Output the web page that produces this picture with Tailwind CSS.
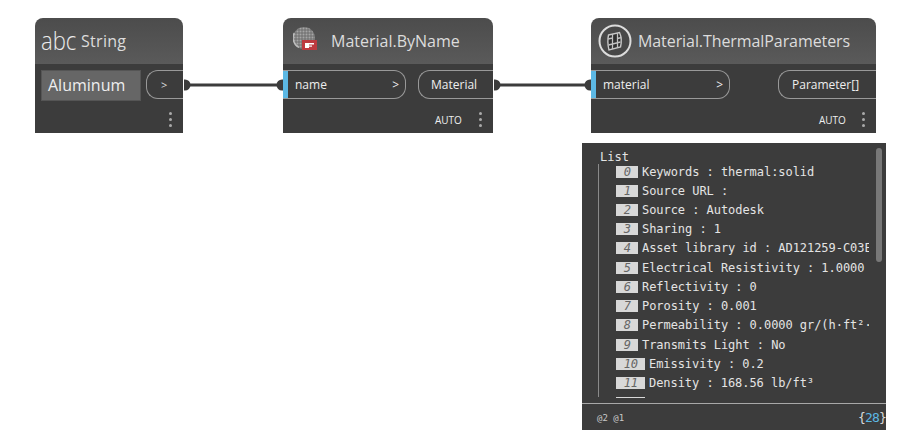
<!DOCTYPE html>
<html>
<head>
<meta charset="utf-8">
<script src="https://cdn.jsdelivr.net/npm/@tailwindcss/browser@4"></script>
</head>
<body class="bg-white">
<div class="relative w-[910px] h-[442px] overflow-hidden bg-white font-['Open_Sans','Noto_Sans',sans-serif]">

  <!-- connectors -->
  <svg class="absolute left-0 top-0" width="910" height="442" viewBox="0 0 910 442" fill="none">
    <path d="M184 79.5 h1 a5.5 5.5 0 0 1 0 11 h-1 Z" fill="#3c3c3c"/>
    <path d="M283 79.5 h-1 a5.5 5.5 0 0 0 0 11 h1 Z" fill="#3c3c3c"/>
    <path d="M187 85 H281" stroke="#3c3c3c" stroke-width="3"/>
    <path d="M494 79.5 h1 a5.5 5.5 0 0 1 0 11 h-1 Z" fill="#3c3c3c"/>
    <path d="M591 79.5 h-1 a5.5 5.5 0 0 0 0 11 h1 Z" fill="#3c3c3c"/>
    <path d="M497 85 H589" stroke="#3c3c3c" stroke-width="3"/>
  </svg>

  <!-- String node -->
  <div class="absolute left-[35px] top-[18px] w-[148px] h-[115px] flex flex-col">
    <div class="h-[46px] shrink-0 rounded-t-lg bg-gradient-to-b from-[#4c4c4c] to-[#5a5a5a] flex items-center pl-[6px] text-[#dcdcdc]">
      <span class="block w-[32px] text-[26px] leading-none font-light text-[#ececec] scale-x-[0.85] origin-left -mt-[3px]">abc</span>
      <span class="ml-[8px] text-[16px] leading-none tracking-[0.3px]">String</span>
    </div>
    <div class="flex-1 bg-[#3c3c3c] relative pt-[6px] pl-[6px]">
      <div class="flex items-start gap-[5px]">
        <div class="w-[100px] h-[31px] bg-[#666666] border border-[#555555] text-[#eeeeee] text-[16px] leading-[28px] pl-[6px]">Aluminum</div>
        <div class="w-[37px] h-[29px] rounded-l-[12px] border border-r-0 border-[#999999] text-[#dddddd] text-[11px] leading-[27px] pl-[14px]">&gt;</div>
      </div>
      <div class="absolute right-[11px] bottom-[6px] flex flex-col gap-[3px]">
        <i class="block w-[3px] h-[3px] bg-[#aaaaaa] rounded-full"></i><i class="block w-[3px] h-[3px] bg-[#aaaaaa] rounded-full"></i><i class="block w-[3px] h-[3px] bg-[#aaaaaa] rounded-full"></i>
      </div>
    </div>
  </div>

  <!-- Material.ByName node -->
  <div class="absolute left-[283px] top-[18px] w-[210px] h-[115px] flex flex-col">
    <div class="h-[46px] shrink-0 rounded-t-lg bg-gradient-to-b from-[#4c4c4c] to-[#5a5a5a] flex items-center pl-[10px] text-[#dcdcdc]">
      <svg width="25" height="26" viewBox="0 0 25 26" class="shrink-0 -mt-[2px]">
        <defs><pattern id="chk" width="3" height="3" patternUnits="userSpaceOnUse"><rect width="3" height="3" fill="#777777"/><circle cx="1.5" cy="1.5" r="1" fill="#a6a6a6"/></pattern></defs>
        <circle cx="11" cy="11" r="11" fill="url(#chk)"/>
        <path d="M1.2 6 A11 11 0 0 0 6 20.5" stroke="#bdbdbd" stroke-width="1.4" fill="none"/>
        <rect x="9" y="13" width="15" height="10" fill="#bd3a40"/>
        <rect x="12" y="16" width="4" height="5" fill="#ffffff"/>
        <rect x="16" y="16" width="5" height="1.5" fill="#ffffff"/>
        <rect x="16" y="18.5" width="3" height="1.2" fill="#ffffff"/>
      </svg>
      <span class="ml-[13px] text-[16px] leading-none">Material.ByName</span>
    </div>
    <div class="flex-1 bg-[#3c3c3c] relative pt-[6px]">
      <div class="flex items-start justify-between">
        <div class="w-[123px] h-[29px] rounded-r-[12px] border border-l-0 border-[#999999] text-[#eeeeee] text-[12px] leading-[27px] flex overflow-hidden">
          <i class="block w-[5px] h-full bg-[#5cb8e4]"></i>
          <span class="ml-[7px] flex-1">name</span><span class="mr-[6px]">&gt;</span>
        </div>
        <div class="w-[75px] h-[29px] rounded-l-[12px] border border-r-0 border-[#999999] text-[#eeeeee] text-[12px] leading-[27px] pl-[12px]">Material</div>
      </div>
      <span class="absolute left-[152px] bottom-[8px] text-[10px] leading-none font-normal text-[#eeeeee]">AUTO</span>
      <div class="absolute right-[11px] bottom-[6px] flex flex-col gap-[3px]">
        <i class="block w-[3px] h-[3px] bg-[#aaaaaa] rounded-full"></i><i class="block w-[3px] h-[3px] bg-[#aaaaaa] rounded-full"></i><i class="block w-[3px] h-[3px] bg-[#aaaaaa] rounded-full"></i>
      </div>
    </div>
  </div>

  <!-- Material.ThermalParameters node -->
  <div class="absolute left-[591px] top-[18px] w-[285px] h-[115px] flex flex-col">
    <div class="h-[46px] shrink-0 rounded-t-lg bg-gradient-to-b from-[#4c4c4c] to-[#5a5a5a] flex items-center pl-[7px] text-[#dcdcdc]">
      <svg width="34" height="34" viewBox="0 0 34 34" fill="none" class="shrink-0 -mt-[1px]">
        <circle cx="17" cy="17" r="15.5" fill="#484848" stroke="#dcdcdc" stroke-width="2"/>
        <path d="M10.5 11 L21.5 8.5 Q24.5 15 22.5 23 L11 26 Q9 18 10.5 11 Z" fill="#2e2e2e" stroke="#c8c8c8" stroke-width="1.4"/>
        <path d="M14.5 10 V25 M19.5 9 V24 M10 15 L14.5 14 M19.5 14.5 L23.3 13.5 M10.5 21 L22.5 18" stroke="#c0c0c0" stroke-width="1.3"/>
      </svg>
      <span class="ml-[6px] text-[16px] leading-none tracking-[-0.08px]">Material.ThermalParameters</span>
    </div>
    <div class="flex-1 bg-[#3c3c3c] relative pt-[6px]">
      <div class="flex items-start justify-between">
        <div class="w-[139px] h-[29px] rounded-r-[12px] border border-l-0 border-[#999999] text-[#eeeeee] text-[12px] leading-[27px] flex overflow-hidden">
          <i class="block w-[5px] h-full bg-[#5cb8e4]"></i>
          <span class="ml-[7px] flex-1">material</span><span class="mr-[6px]">&gt;</span>
        </div>
        <div class="w-[98px] h-[29px] rounded-l-[12px] border border-r-0 border-[#999999] text-[#eeeeee] text-[12px] leading-[27px] pl-[13px]">Parameter[]</div>
      </div>
      <span class="absolute left-[228px] bottom-[8px] text-[10px] leading-none font-normal text-[#eeeeee]">AUTO</span>
      <div class="absolute right-[11px] bottom-[6px] flex flex-col gap-[3px]">
        <i class="block w-[3px] h-[3px] bg-[#aaaaaa] rounded-full"></i><i class="block w-[3px] h-[3px] bg-[#aaaaaa] rounded-full"></i><i class="block w-[3px] h-[3px] bg-[#aaaaaa] rounded-full"></i>
      </div>
    </div>
  </div>

  <!-- Preview bubble -->
  <div class="absolute left-[582px] top-[143px] w-[304px] h-[287px] bg-[#3c3c3c] flex flex-col font-['DejaVu_Sans_Mono',monospace] text-[#e4e4e4]">
    <div class="relative h-[261px] shrink-0 overflow-hidden border-b border-[#a8a8a8]">
      <div class="absolute right-[4px] top-[5px] w-[6px] h-[114px] rounded-full bg-[#787878]"></div>
      <div class="absolute left-[16px] top-[21px] bottom-[6px] w-px bg-[#8a8a8a]"></div>
      <div class="absolute left-[18px] top-[7px] text-[12px] leading-[14px]">List</div>
      <div class="absolute left-[34px] top-[22px] w-[253px] h-[233px] overflow-hidden flex flex-col text-[12px] leading-[14px] tracking-[-0.05px] whitespace-nowrap">
        <div class="h-[19px] shrink-0 flex items-start"><span class="w-[22px] h-[12px] mt-[1px] mr-[4px] bg-[#d8d8d8] text-[#666666] italic text-right pr-[7px] leading-[12px] shrink-0">0</span>Keywords : thermal:solid</div>
        <div class="h-[19px] shrink-0 flex items-start"><span class="w-[22px] h-[12px] mt-[1px] mr-[4px] bg-[#d8d8d8] text-[#666666] italic text-right pr-[7px] leading-[12px] shrink-0">1</span>Source URL :</div>
        <div class="h-[19px] shrink-0 flex items-start"><span class="w-[22px] h-[12px] mt-[1px] mr-[4px] bg-[#d8d8d8] text-[#666666] italic text-right pr-[7px] leading-[12px] shrink-0">2</span>Source : Autodesk</div>
        <div class="h-[19px] shrink-0 flex items-start"><span class="w-[22px] h-[12px] mt-[1px] mr-[4px] bg-[#d8d8d8] text-[#666666] italic text-right pr-[7px] leading-[12px] shrink-0">3</span>Sharing : 1</div>
        <div class="h-[20px] shrink-0 flex items-start"><span class="w-[22px] h-[12px] mt-[1px] mr-[4px] bg-[#d8d8d8] text-[#666666] italic text-right pr-[7px] leading-[12px] shrink-0">4</span>Asset library id : AD121259-C03E</div>
        <div class="h-[19px] shrink-0 flex items-start"><span class="w-[22px] h-[12px] mt-[1px] mr-[4px] bg-[#d8d8d8] text-[#666666] italic text-right pr-[7px] leading-[12px] shrink-0">5</span>Electrical Resistivity : 1.0000</div>
        <div class="h-[19px] shrink-0 flex items-start"><span class="w-[22px] h-[12px] mt-[1px] mr-[4px] bg-[#d8d8d8] text-[#666666] italic text-right pr-[7px] leading-[12px] shrink-0">6</span>Reflectivity : 0</div>
        <div class="h-[19px] shrink-0 flex items-start"><span class="w-[22px] h-[12px] mt-[1px] mr-[4px] bg-[#d8d8d8] text-[#666666] italic text-right pr-[7px] leading-[12px] shrink-0">7</span>Porosity : 0.001</div>
        <div class="h-[20px] shrink-0 flex items-start"><span class="w-[22px] h-[12px] mt-[1px] mr-[4px] bg-[#d8d8d8] text-[#666666] italic text-right pr-[7px] leading-[12px] shrink-0">8</span>Permeability : 0.0000 gr/(h·ft²·</div>
        <div class="h-[19px] shrink-0 flex items-start"><span class="w-[22px] h-[12px] mt-[1px] mr-[4px] bg-[#d8d8d8] text-[#666666] italic text-right pr-[7px] leading-[12px] shrink-0">9</span>Transmits Light : No</div>
        <div class="h-[19px] shrink-0 flex items-start"><span class="w-[29px] h-[12px] mt-[1px] mr-[4px] bg-[#d8d8d8] text-[#666666] italic text-right pr-[7px] leading-[12px] shrink-0">10</span>Emissivity : 0.2</div>
        <div class="h-[20px] shrink-0 flex items-start"><span class="w-[29px] h-[12px] mt-[1px] mr-[4px] bg-[#d8d8d8] text-[#666666] italic text-right pr-[7px] leading-[12px] shrink-0">11</span>Density : 168.56 lb/ft³</div>
        <div class="h-[19px] shrink-0 flex items-start"><span class="w-[29px] h-[12px] mt-[1px] mr-[4px] bg-[#d8d8d8] text-[#666666] italic text-right pr-[7px] leading-[12px] shrink-0">12</span><span class="mt-[1px]">Thermal Conductivity : 137 W/(m·K)</span></div>
      </div>
    </div>
    <div class="flex-1 flex items-center justify-between pl-[15px] pr-[0px]">
      <span class="text-[9px] leading-none text-[#c8c8c8] pt-[2px]">@2 @1</span>
      <span class="text-[13px] leading-none tracking-[-0.8px] text-[#d8d8d8] pt-[1px]">{<span class="text-[#5cb8e4]">28</span>}</span>
    </div>
  </div>
</div>
</body>
</html>
